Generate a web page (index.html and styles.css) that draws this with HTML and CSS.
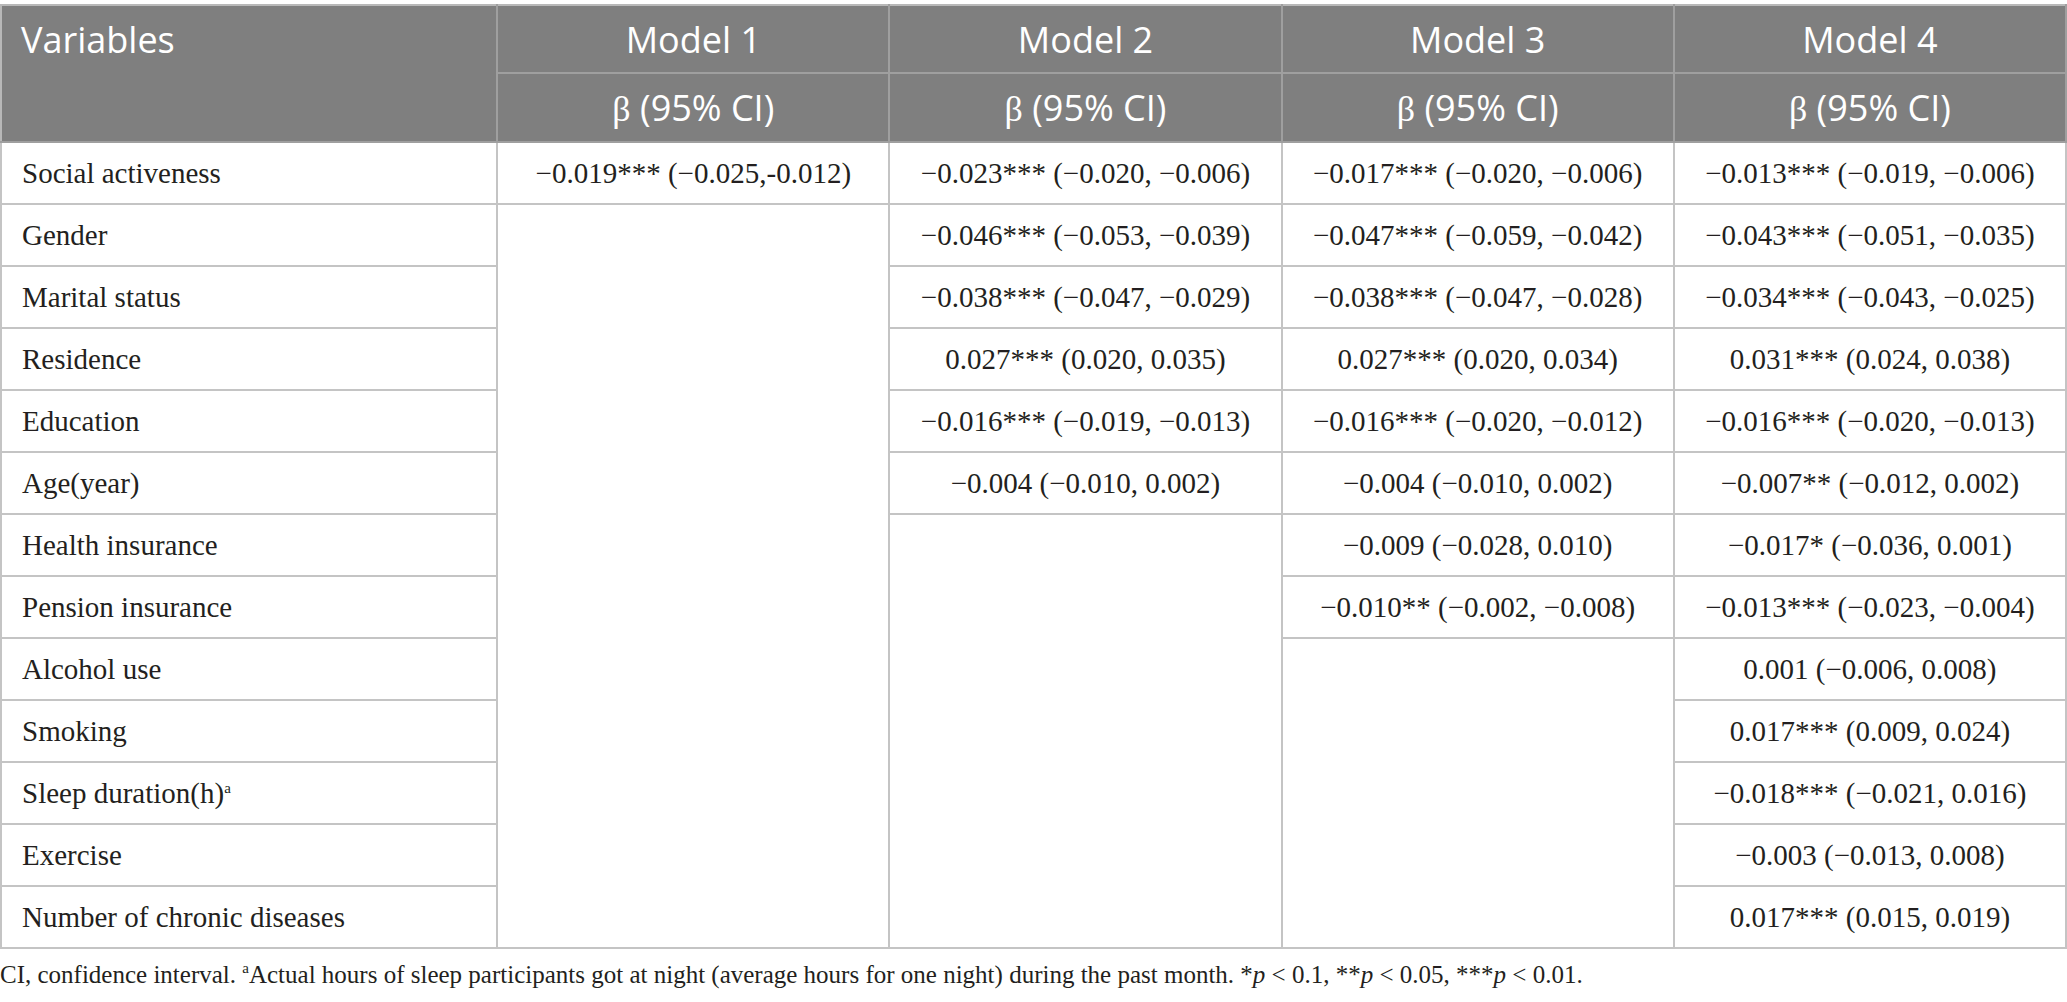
FILE: index.html
```html
<!DOCTYPE html>
<html>
<head>
<meta charset="utf-8">
<link rel="stylesheet" href="styles.css">
</head>
<body>
<table class="tbl">
  <colgroup>
    <col class="c-var">
    <col class="c-m">
    <col class="c-m">
    <col class="c-m">
    <col class="c-m">
  </colgroup>
  <thead>
    <tr class="h1">
      <th rowspan="2" class="th-var"><div class="var-label">Variables</div></th>
      <th>Model 1</th>
      <th>Model 2</th>
      <th>Model 3</th>
      <th>Model 4</th>
    </tr>
    <tr class="h2">
      <th><span class="beta">β</span> (95% CI)</th>
      <th><span class="beta">β</span> (95% CI)</th>
      <th><span class="beta">β</span> (95% CI)</th>
      <th><span class="beta">β</span> (95% CI)</th>
    </tr>
  </thead>
  <tbody>
    <tr>
      <td class="lbl">Social activeness</td>
      <td>−0.019*** (−0.025,-0.012)</td>
      <td>−0.023*** (−0.020, −0.006)</td>
      <td>−0.017*** (−0.020, −0.006)</td>
      <td>−0.013*** (−0.019, −0.006)</td>
    </tr>
    <tr>
      <td class="lbl">Gender</td>
      <td rowspan="12"></td>
      <td>−0.046*** (−0.053, −0.039)</td>
      <td>−0.047*** (−0.059, −0.042)</td>
      <td>−0.043*** (−0.051, −0.035)</td>
    </tr>
    <tr>
      <td class="lbl">Marital status</td>
      <td>−0.038*** (−0.047, −0.029)</td>
      <td>−0.038*** (−0.047, −0.028)</td>
      <td>−0.034*** (−0.043, −0.025)</td>
    </tr>
    <tr>
      <td class="lbl">Residence</td>
      <td>0.027*** (0.020, 0.035)</td>
      <td>0.027*** (0.020, 0.034)</td>
      <td>0.031*** (0.024, 0.038)</td>
    </tr>
    <tr>
      <td class="lbl">Education</td>
      <td>−0.016*** (−0.019, −0.013)</td>
      <td>−0.016*** (−0.020, −0.012)</td>
      <td>−0.016*** (−0.020, −0.013)</td>
    </tr>
    <tr>
      <td class="lbl">Age(year)</td>
      <td>−0.004 (−0.010, 0.002)</td>
      <td>−0.004 (−0.010, 0.002)</td>
      <td>−0.007** (−0.012, 0.002)</td>
    </tr>
    <tr>
      <td class="lbl">Health insurance</td>
      <td rowspan="7"></td>
      <td>−0.009 (−0.028, 0.010)</td>
      <td>−0.017* (−0.036, 0.001)</td>
    </tr>
    <tr>
      <td class="lbl">Pension insurance</td>
      <td>−0.010** (−0.002, −0.008)</td>
      <td>−0.013*** (−0.023, −0.004)</td>
    </tr>
    <tr>
      <td class="lbl">Alcohol use</td>
      <td rowspan="5"></td>
      <td>0.001 (−0.006, 0.008)</td>
    </tr>
    <tr>
      <td class="lbl">Smoking</td>
      <td>0.017*** (0.009, 0.024)</td>
    </tr>
    <tr>
      <td class="lbl">Sleep duration(h)<sup class="sup">a</sup></td>
      <td>−0.018*** (−0.021, 0.016)</td>
    </tr>
    <tr>
      <td class="lbl">Exercise</td>
      <td>−0.003 (−0.013, 0.008)</td>
    </tr>
    <tr>
      <td class="lbl">Number of chronic diseases</td>
      <td>0.017*** (0.015, 0.019)</td>
    </tr>
  </tbody>
</table>
<p class="note">CI, confidence interval. <sup class="sup">a</sup>Actual hours of sleep participants got at night (average hours for one night) during the past month. *<i>p</i> &lt; 0.1, **<i>p</i> &lt; 0.05, ***<i>p</i> &lt; 0.01.</p>
</body>
</html>
```

FILE: styles.css
```css
html, body {
  margin: 0;
  padding: 0;
  background: #ffffff;
}

body {
  padding-top: 4px;
  font-family: "Liberation Serif", "Times New Roman", serif;
  color: #231f20;
}

.tbl {
  width: 2067px;
  border-collapse: collapse;
  table-layout: fixed;
  border: 2px solid #b8b8b8;
}

.c-var { width: 496px; }
.c-m { width: 392px; }

.tbl th {
  background: #7f7f7f;
  color: #ffffff;
  font-family: "Open Sans", "Noto Sans", sans-serif;
  font-weight: 400;
  font-size: 36px;
  text-align: center;
  padding: 0;
  border: 2px solid #9f9f9f;
}

.beta {
  font-family: "Liberation Serif", "Times New Roman", serif;
  font-size: 36px;
}

.h1 { height: 68px; }
.h2 { height: 69px; }

.h1 th { border-top: 2px solid #b8b8b8; }

.tbl th.th-var {
  text-align: left;
  vertical-align: top;
  padding: 0 0 0 19px;
  border-left-color: #b8b8b8;
}

.var-label {
  height: 66px;
  display: flex;
  align-items: center;
}

.tbl tbody tr { height: 62px; }

.tbl td {
  font-size: 29px;
  text-align: center;
  padding: 0;
  border: 2px solid #c4c4c4;
  white-space: nowrap;
}

.tbl td.lbl {
  text-align: left;
  padding-left: 20px;
}

.sup {
  font-size: 15px;
  vertical-align: 10px;
  line-height: 0;
}

.note {
  margin: 12px 0 0 0;
  font-size: 25px;
  white-space: nowrap;
}
```
